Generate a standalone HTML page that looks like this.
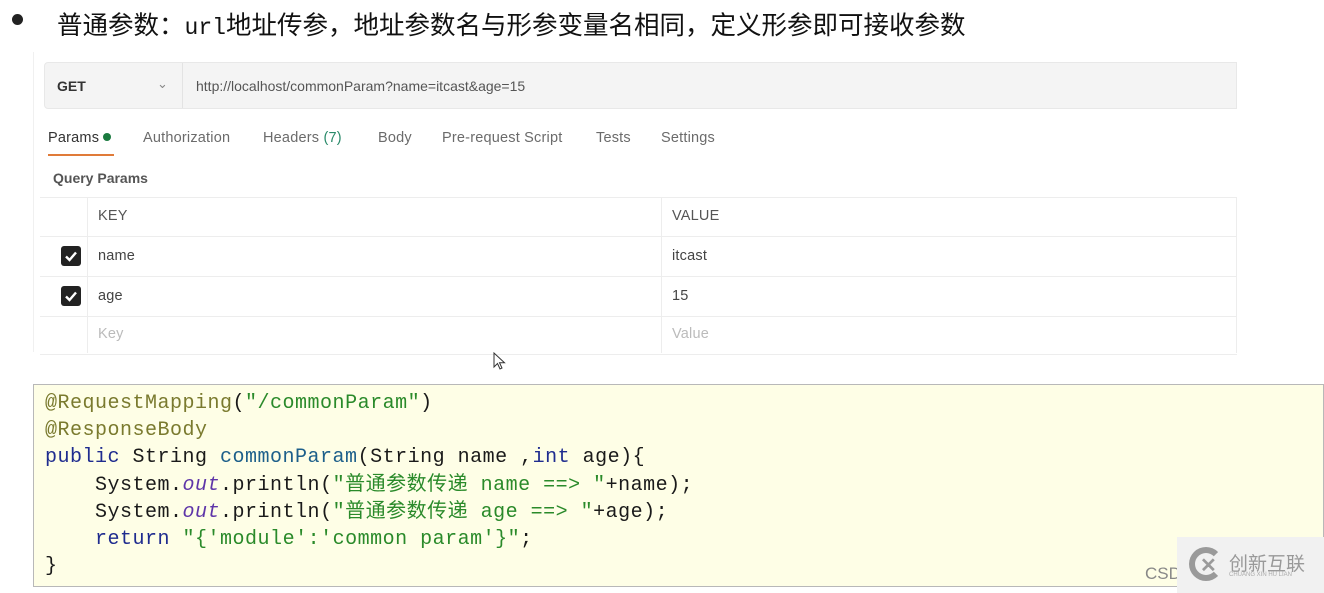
<!DOCTYPE html>
<html><head><meta charset="utf-8"><style>
*{margin:0;padding:0;box-sizing:border-box}
body{width:1324px;height:593px;background:#fff;position:relative;overflow:hidden;font-family:"Liberation Sans","Noto Sans CJK SC",sans-serif}
.a{position:absolute;white-space:nowrap}
.t{font-size:14.5px;color:#6b6b6b;letter-spacing:0.2px}
.hl{position:absolute;height:1px;background:#ededed}
.vl{position:absolute;width:1px;background:#ededed}
.cb{position:absolute;left:61px;width:20px;height:20px;background:#222;border-radius:3px}
.code{position:absolute;left:33px;top:384px;width:1291px;height:203px;background:#fefee6;border:1px solid #b8b8b8;font-family:"Liberation Mono","Noto Sans CJK SC",monospace;font-size:20px;line-height:27.2px;padding:5px 0 0 11px;color:#1a1a1a;letter-spacing:0.5px;white-space:pre}
.an{color:#7a7a2e}.s{color:#2a8a2a}.k{color:#1f2c8f}.m{color:#1d5f8a}.i{font-style:italic;color:#5e35a8}
</style></head><body>
<div class="a" style="left:12px;top:14px;width:11px;height:11px;border-radius:50%;background:#222"></div>
<div class="a" style="left:57px;top:5px;font-size:25.5px;color:#111">普通参数：<span style="font-family:'Liberation Mono',monospace;font-size:23px">url</span>地址传参，地址参数名与形参变量名相同，定义形参即可接收参数</div>

<div class="a" style="left:33px;top:52px;width:1204px;height:300px;border-left:1px solid #f0f0f0"></div>
<div class="a" style="left:44px;top:62px;width:1193px;height:47px;background:#f4f4f4;border-radius:4px 0 0 4px;border:1px solid #e8e8e8"></div>
<div class="vl" style="left:182px;top:63px;height:45px;background:#e3e3e3"></div>
<div class="a" style="left:57px;top:78px;font-size:14px;font-weight:bold;color:#333">GET</div>
<div class="a" style="left:157px;top:76px;font-size:13px;color:#888">&#8964;</div>
<div class="a" style="left:196px;top:78px;font-size:14px;color:#555">http://localhost/commonParam?name=itcast&amp;age=15</div>

<div class="a t" style="left:48px;top:130px;color:#333">Params <span style="display:inline-block;width:8px;height:8px;border-radius:50%;background:#1a7a3f;vertical-align:1px"></span></div>
<div class="a" style="left:48px;top:154px;width:66px;height:2px;background:#e07b39"></div>
<div class="a t" style="left:143px;top:130px">Authorization</div>
<div class="a t" style="left:263px;top:130px">Headers <span style="color:#2a8a6a">(7)</span></div>
<div class="a t" style="left:378px;top:130px">Body</div>
<div class="a t" style="left:442px;top:130px">Pre-request Script</div>
<div class="a t" style="left:596px;top:130px">Tests</div>
<div class="a t" style="left:661px;top:130px">Settings</div>
<div class="a" style="left:53px;top:170px;font-size:14px;color:#555;font-weight:bold">Query Params</div>

<div class="hl" style="left:40px;top:197px;width:1197px"></div>
<div class="hl" style="left:40px;top:236px;width:1197px"></div>
<div class="hl" style="left:40px;top:276px;width:1197px"></div>
<div class="hl" style="left:40px;top:316px;width:1197px"></div>
<div class="hl" style="left:40px;top:354px;width:1197px"></div>
<div class="vl" style="left:87px;top:197px;height:156px"></div>
<div class="vl" style="left:661px;top:197px;height:156px"></div>
<div class="vl" style="left:1236px;top:197px;height:156px"></div>
<div class="a t" style="left:98px;top:208px;color:#555">KEY</div>
<div class="a t" style="left:672px;top:208px;color:#555">VALUE</div>
<div class="cb" style="top:246px"><svg width="20" height="20"><path d="M5 10.5l3.5 3.5L15 6.5" stroke="#fff" stroke-width="2.4" fill="none"/></svg></div>
<div class="cb" style="top:286px"><svg width="20" height="20"><path d="M5 10.5l3.5 3.5L15 6.5" stroke="#fff" stroke-width="2.4" fill="none"/></svg></div>
<div class="a t" style="left:98px;top:248px;color:#444">name</div>
<div class="a t" style="left:672px;top:248px;color:#444">itcast</div>
<div class="a t" style="left:98px;top:288px;color:#444">age</div>
<div class="a t" style="left:672px;top:288px;color:#444">15</div>
<div class="a t" style="left:98px;top:326px;color:#bbb">Key</div>
<div class="a t" style="left:672px;top:326px;color:#bbb">Value</div>
<svg class="a" style="left:493px;top:352px" width="14" height="20"><path d="M1 1v14l3.5-3.5 2.5 5.5 2-1-2.5-5.3h5z" fill="#fff" stroke="#333" stroke-width="1"/></svg>

<div class="code"><span class="an">@RequestMapping</span>(<span class="s">"/commonParam"</span>)
<span class="an">@ResponseBody</span>
<span class="k">public</span> String <span class="m">commonParam</span>(String name ,<span class="k">int</span> age){
    System.<span class="i">out</span>.println(<span class="s">"普通参数传递 name ==> "</span>+name);
    System.<span class="i">out</span>.println(<span class="s">"普通参数传递 age ==> "</span>+age);
    <span class="k">return</span> <span class="s">"{'module':'common param'}"</span>;
}</div>
<div class="a" style="left:1145px;top:564px;font-size:17px;color:#888">CSD</div>
<div class="a" style="left:1177px;top:537px;width:147px;height:56px;background:#f1f1f1"></div>
<div class="a" style="left:1189px;top:547px;width:34px;height:34px;border-radius:50%;border:6px solid #9a9a9a;border-right-color:transparent"></div>
<div class="a" style="left:1200px;top:553px;font-size:20px;font-weight:bold;color:#9a9a9a">✕</div>
<div class="a" style="left:1229px;top:549px;font-size:19px;color:#999">创新互联</div>
<div class="a" style="left:1229px;top:572px;font-size:6px;color:#aaa">CHUANG XIN HU LIAN</div>
</body></html>
